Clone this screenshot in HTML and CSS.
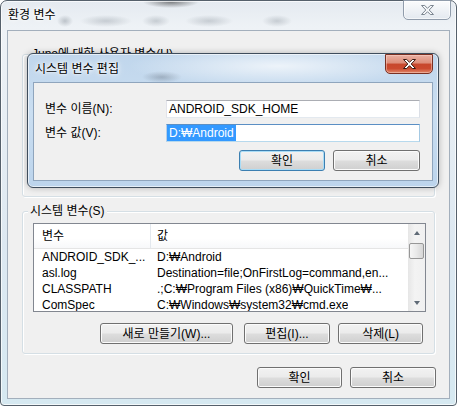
FILE: index.html
```html
<!DOCTYPE html>
<html lang="ko">
<head>
<meta charset="utf-8">
<title>환경 변수</title>
<link rel="stylesheet" href="styles.css">
</head>
<body>
<div class="window">
	<div class="titlebar">
		<span class="title">환경 변수</span>
		<span class="close inactive">
			<svg width="15" height="12" viewBox="0 0 15 12"><path d="M1.5 1.5h3.2l2.8 2.8 2.8-2.8h3.2l-4.3 4.5 4.3 4.5h-3.2l-2.8-2.8-2.8 2.8h-3.2l4.3-4.5z" fill="#f4f6f8" stroke="#7c8691" stroke-width="1" stroke-linejoin="round"/></svg>
		</span>
	</div>
	<div class="client">
		<div class="group user">
			<span class="legend">Juno에 대한 사용자 변수(U)</span>
		</div>
		<div class="group system">
			<span class="legend">시스템 변수(S)</span>
			<div class="list">
				<div class="list-body">
					<div class="list-head">
						<span class="col1">변수</span><span class="col2">값</span>
					</div>
					<div class="row"><span class="col1">ANDROID_SDK_...</span><span class="col2">D:₩Android</span></div>
					<div class="row"><span class="col1">asl.log</span><span class="col2">Destination=file;OnFirstLog=command,en...</span></div>
					<div class="row"><span class="col1">CLASSPATH</span><span class="col2">.;C:₩Program Files (x86)₩QuickTime₩...</span></div>
					<div class="row"><span class="col1">ComSpec</span><span class="col2">C:₩Windows₩system32₩cmd.exe</span></div>
				</div>
				<div class="scrollbar">
					<span class="sb-btn"><i class="arrow up"></i></span>
					<span class="sb-thumb"></span>
					<span class="sb-track"></span>
					<span class="sb-btn"><i class="arrow down"></i></span>
				</div>
			</div>
			<div class="btn-row">
				<button class="btn w-new">새로 만들기(W)...</button>
				<button class="btn w-edit">편집(I)...</button>
				<button class="btn w-del">삭제(L)</button>
			</div>
		</div>
		<div class="btn-row main">
			<button class="btn w-ok">확인</button>
			<button class="btn w-cancel">취소</button>
		</div>
	</div>

	<div class="dialog">
		<div class="titlebar">
			<span class="title">시스템 변수 편집</span>
			<span class="close active">
				<svg width="15" height="12" viewBox="0 0 15 12"><path d="M1.5 1.5h3.2l2.8 2.8 2.8-2.8h3.2l-4.3 4.5 4.3 4.5h-3.2l-2.8-2.8-2.8 2.8h-3.2l4.3-4.5z" fill="#fff" stroke="#3a1a12" stroke-width="1" stroke-linejoin="round"/></svg>
			</span>
		</div>
		<div class="client dlg-client">
			<div class="fields">
				<label>변수 이름(N):</label>
				<div class="textbox">ANDROID_SDK_HOME</div>
				<label>변수 값(V):</label>
				<div class="textbox focus"><span class="sel">D:₩Android</span></div>
			</div>
			<div class="btn-row dlg-btns">
				<button class="btn default d-ok">확인</button>
				<button class="btn d-cancel">취소</button>
			</div>
		</div>
	</div>
</div>
</body>
</html>
```

FILE: styles.css
```css
* {
	box-sizing: border-box;
}
body {
	margin: 0;
	font: 12px/14px "Liberation Sans", "Noto Sans CJK KR", sans-serif;
	color: #000;
	background: #fff;
}

/* outer window */
.window {
	position: relative;
	width: 457px;
	height: 406px;
	border: 1px solid #55606b;
	border-radius: 7px 7px 4px 4px;
	padding: 0 6px 6px;
	display: flex;
	flex-direction: column;
	box-shadow: inset 0 0 0 1px rgba(255,255,255,.7);
	background:
		radial-gradient(28px 6px at 170px 1px, rgba(40,40,40,.55), transparent),
		radial-gradient(8px 6px at 64px 20px, rgba(100,110,120,.35), transparent),
		radial-gradient(26px 6px at 105px 20px, rgba(110,120,130,.3), transparent),
		radial-gradient(14px 6px at 155px 20px, rgba(110,120,130,.3), transparent),
		radial-gradient(24px 6px at 208px 20px, rgba(110,120,130,.3), transparent),
		radial-gradient(15px 6px at 276px 20px, rgba(110,120,130,.3), transparent),
		linear-gradient(#e4eaf0, #eef2f6 26px, #dde8f1 60%, #d6e9f1);
}
.titlebar {
	height: 29px;
	flex: none;
	display: flex;
	justify-content: space-between;
	align-items: flex-start;
}
.title {
	margin: 7px 0 0 1px;
	text-shadow: 0 0 8px #fff, 0 0 4px #fff, 0 0 2px #fff;
}
.close {
	width: 48px;
	height: 20px;
	display: flex;
	align-items: center;
	justify-content: center;
	border: 1px solid;
	border-radius: 0 0 5px 5px;
}
.close.inactive {
	margin: -1px -1px 0 0;
	border-color: #909cab;
	background: linear-gradient(rgba(255,255,255,.85), rgba(226,232,239,.85));
	box-shadow: inset 0 0 0 1px rgba(255,255,255,.6);
}
.close.active {
	border-color: #7a3022;
	background: linear-gradient(#eab0a2, #dd8d79 45%, #c7472c 50%, #cb4a2f 75%, #e0886a);
	box-shadow: inset 0 0 0 1px rgba(255,220,210,.45);
}

.client {
	flex: 1;
	border: 1px solid #a3afbc;
	background: #f0f0f0;
	display: flex;
	flex-direction: column;
}

/* group boxes */
.group {
	height: 143px;
	margin: 0 14px;
	border: 1px solid #d5dfe5;
	border-radius: 3px;
	box-shadow: inset 1px 1px 0 #fff, 1px 1px 0 #fff;
	display: flex;
	flex-direction: column;
}
.group.user {
	margin-top: 23px;
}
.group.system {
	margin-top: 14px;
}
.legend {
	align-self: flex-start;
	margin: -8px 0 0 5px;
	padding: 0 2px;
	background: #f0f0f0;
	line-height: 14px;
}
.user .legend {
	margin-left: 7px;
}

/* list view */
.list {
	margin: 5px 0 0 10px;
	width: 393px;
	height: 89px;
	border: 1px solid #828790;
	background: #fff;
	display: flex;
	overflow: hidden;
}
.list-body {
	flex: 1;
	overflow: hidden;
}
.list-head {
	height: 25px;
	display: flex;
	border-bottom: 1px solid #e5e5e5;
	background: linear-gradient(#fff, #fff 60%, #f7f8fa);
}
.list-head span {
	line-height: 24px;
}
.list-head .col1 {
	border-right: 1px solid #e3e8ee;
}
.row {
	height: 16px;
	line-height: 16px;
	display: flex;
	white-space: nowrap;
}
.col1 {
	width: 117px;
	flex: none;
	padding-left: 8px;
	overflow: hidden;
}
.col2 {
	padding-left: 6px;
	overflow: hidden;
}

.scrollbar {
	width: 17px;
	flex: none;
	display: flex;
	flex-direction: column;
	background: linear-gradient(90deg, #e6e6e6, #f3f3f3 40%, #f0f0f0);
}
.sb-btn {
	height: 17px;
	display: flex;
	align-items: center;
	justify-content: center;
}
.sb-thumb {
	height: 16px;
	margin: 2px 1px 0;
	border: 1px solid #979797;
	border-radius: 2px;
	background: linear-gradient(90deg, #f6f6f6, #e9e9e9 50%, #d6d6d6);
}
.sb-track {
	flex: 1;
}
.arrow {
	width: 0;
	height: 0;
	border-left: 3px solid transparent;
	border-right: 3px solid transparent;
}
.arrow.up {
	border-bottom: 4px solid #5f6a76;
}
.arrow.down {
	border-top: 4px solid #5f6a76;
}

/* buttons */
.btn-row {
	display: flex;
	height: 21px;
	flex: none;
}
.group .btn-row {
	margin-top: 11px;
	padding-left: 77px;
}
.btn-row.main {
	margin: 13px 13px 0 0;
	justify-content: flex-end;
}
.btn {
	height: 21px;
	padding: 0;
	font: inherit;
	color: #000;
	border: 1px solid #707070;
	border-radius: 3px;
	background: linear-gradient(#f2f2f2, #ebebeb 48%, #dddddd 52%, #cfcfcf);
	box-shadow: inset 0 0 0 1px #fbfbfb;
}
.w-new { width: 133px; }
.w-edit { width: 86px; margin-left: 11px; }
.w-del { width: 85px; margin-left: 8px; }
.w-ok { width: 85px; }
.w-cancel { width: 86px; margin-left: 8px; }

/* edit dialog */
.dialog {
	position: absolute;
	left: 26px;
	top: 52px;
	width: 412px;
	height: 135px;
	border: 1px solid #3f4d5c;
	border-radius: 6px;
	padding: 0 5px 6px;
	display: flex;
	flex-direction: column;
	box-shadow: inset 0 0 0 1px rgba(255,255,255,.6), 0 0 6px rgba(0,0,0,.25);
	background:
		radial-gradient(150px 20px at 250px 12px, rgba(255,255,255,.7), transparent),
		radial-gradient(20px 6px at 134px 23px, rgba(80,90,105,.35), transparent),
		linear-gradient(#c0d6ec, #cadef1 45%, #bcd4ec);
}
.dialog .titlebar {
	height: 28px;
}
.dialog .title {
	margin: 8px 0 0 2px;
}
.dlg-client {
	border-color: #8fa5bd;
}
.fields {
	display: grid;
	grid-template-columns: 121px 254px;
	row-gap: 6px;
	align-items: center;
	padding: 17px 12px 0 11px;
}
.textbox {
	height: 18px;
	line-height: 16px;
	padding: 0 2px;
	background: #fff;
	border: 1px solid;
	border-color: #abadb3 #dbdfe6 #e3e9ef #e2e3ea;
	white-space: nowrap;
}
.textbox.focus {
	padding-left: 0;
	border-color: #5b8fc4 #a4c9e3 #b7d9ed #b5cfe7;
}
.sel {
	display: inline-block;
	height: 16px;
	padding: 0 2px;
	background: #3399ff;
	color: #fff;
}
.dlg-btns {
	margin-top: 8px;
	padding-right: 12px;
	justify-content: flex-end;
}
.d-ok { width: 86px; }
.d-cancel { width: 87px; margin-left: 8px; }
.btn.default {
	border-color: #3c7fb1;
	box-shadow: inset 0 0 0 1px #a9dcf6;
}
```
